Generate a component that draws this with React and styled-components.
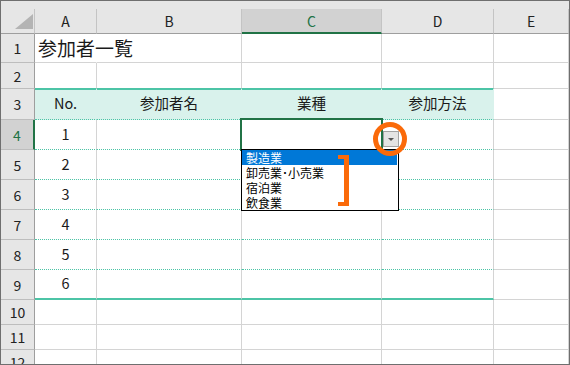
import React from 'react';
import styled, { createGlobalStyle, css } from 'styled-components';

const GRID = '#d4d4d4';
const TEAL = '#4cc4a6';
const TEAL_FILL = '#d9f2ec';
const GREEN = '#217346';
const ORANGE = '#fa6a0a';
const COLS = '34px 62px 145px 140px 112px 1fr';

const GlobalStyle = createGlobalStyle`
  body {
    margin: 0;
    background: #fff;
    font-family: "Noto Sans CJK JP", "Noto Sans", sans-serif;
  }
`;

const Sheet = styled.div`
  position: relative;
  width: 570px;
  height: 365px;
  box-sizing: border-box;
  border: 1px solid #6f6f6f;
  overflow: hidden;
  background: #fff;
  color: #1a1a1a;
`;

const HeaderBar = styled.div`
  display: grid;
  grid-template-columns: ${COLS};
  height: 33px;
  padding-top: 8px;
  box-sizing: border-box;
  background: #e6e6e6;
`;

const ColHead = styled.div`
  display: flex;
  align-items: center;
  justify-content: center;
  border-right: 1px solid #c4c4c4;
  border-bottom: ${p => (p.$active ? `2px solid ${GREEN}` : '1px solid #9e9e9e')};
  background: ${p => (p.$active ? '#d2d2d2' : 'transparent')};
  color: ${p => (p.$active ? GREEN : '#222')};
  font-size: 14px;
  line-height: 1;
`;

const Corner = styled(ColHead)`
  align-items: flex-end;
  justify-content: flex-end;
  padding: 0 1px 4px 0;
`;

const Row = styled.div`
  display: grid;
  grid-template-columns: ${COLS};
  height: ${p => p.$h}px;
`;

const RowHead = styled.div`
  display: flex;
  align-items: center;
  justify-content: center;
  background: ${p => (p.$active ? '#d2d2d2' : '#e6e6e6')};
  color: ${p => (p.$active ? GREEN : '#222')};
  border-bottom: 1px solid #bdbdbd;
  border-right: ${p => (p.$active ? `2px solid ${GREEN}` : '1px solid #9e9e9e')};
  font-size: 14px;
  line-height: 1;
`;

const edgeStyles = {
  grid: css`border-bottom: 1px solid ${GRID};`,
  teal: css`border-bottom: 1px solid ${TEAL};`,
  thick: css`border-bottom: 2px solid ${TEAL};`,
  dash: css`border-bottom: 1px dotted ${TEAL};`,
};

const Cell = styled.div`
  display: flex;
  align-items: center;
  justify-content: ${p => p.$align || 'flex-start'};
  padding: 0 3px 1px;
  white-space: nowrap;
  font-size: 14.5px;
  line-height: 1;
  background-color: ${p => p.$fill || 'transparent'};
  border-right: 1px solid ${p => (p.$noRight ? 'transparent' : p.$fill || GRID)};
  ${p => edgeStyles[p.$edge || 'grid']}
  ${p => p.$topLine && css`box-shadow: inset 0 1px 0 ${TEAL};`}
`;

const Title = styled.span`
  font-size: 19px;
`;

const Selection = styled.div`
  position: absolute;
  left: 239px;
  top: 117px;
  width: 143px;
  height: 33px;
  box-sizing: border-box;
  border: 2px solid ${GREEN};
`;

const DropButton = styled.div`
  position: absolute;
  left: 382px;
  top: 130px;
  width: 16px;
  height: 16px;
  box-sizing: border-box;
  border: 1px solid #a3a3a3;
  background: #e4e4e4;
  display: flex;
  align-items: center;
  justify-content: center;
  &::after {
    content: '';
    border-left: 3px solid transparent;
    border-right: 3px solid transparent;
    border-top: 3px solid #555;
  }
`;

const List = styled.ul`
  position: absolute;
  left: 240px;
  top: 148px;
  width: 158px;
  height: 62px;
  box-sizing: border-box;
  margin: 0;
  padding: 0 1px 0 0;
  list-style: none;
  border: 1px solid #000;
  background: #fff;
`;

const Item = styled.li`
  height: 15px;
  line-height: 15px;
  padding-left: 4px;
  font-size: 12px;
  white-space: nowrap;
  background: ${p => (p.$on ? '#0078d7' : 'transparent')};
  color: ${p => (p.$on ? '#fff' : '#000')};
`;

const Ring = styled.div`
  position: absolute;
  left: 372px;
  top: 121px;
  width: 34px;
  height: 34px;
  box-sizing: border-box;
  border: 5px solid ${ORANGE};
  border-radius: 50%;
`;

const Bracket = styled.div`
  position: absolute;
  left: 337px;
  top: 154px;
  width: 11px;
  height: 51px;
  box-sizing: border-box;
  border: 4px solid ${ORANGE};
  border-right-width: 5px;
  border-left: none;
`;

const letters = ['A', 'B', 'C', 'D', 'E'];
const labels = ['No.', '参加者名', '業種', '参加方法'];
const options = ['製造業', '卸売業･小売業', '宿泊業', '飲食業'];

const rows = [
  { n: 1, h: 29, kind: 'title' },
  { n: 2, h: 26, kind: 'above' },
  { n: 3, h: 31, kind: 'head' },
  ...[4, 5, 6, 7, 8, 9].map(n => ({ n, h: 30, kind: 'body' })),
  ...[10, 11, 12].map(n => ({ n, h: 25, kind: 'plain' })),
];

function renderCells(r) {
  return letters.map((l, i) => {
    const key = l + r.n;
    const inTable = i < 4;
    if (r.kind === 'title') {
      return i === 0 ? (
        <Cell key={key} $noRight>
          <Title>参加者一覧</Title>
        </Cell>
      ) : (
        <Cell key={key} />
      );
    }
    if (!inTable || r.kind === 'plain') return <Cell key={key} />;
    if (r.kind === 'above') return <Cell key={key} $edge="teal" />;
    if (r.kind === 'head') {
      return (
        <Cell key={key} $fill={TEAL_FILL} $edge="dash" $topLine $align="center">
          {labels[i]}
        </Cell>
      );
    }
    return (
      <Cell key={key} $edge={r.n === 9 ? 'thick' : 'dash'} $align="center">
        {i === 0 ? r.n - 3 : null}
      </Cell>
    );
  });
}

export default function App() {
  return (
    <>
      <GlobalStyle />
      <Sheet>
        <HeaderBar>
          <Corner>
            <svg width="18" height="15" viewBox="0 0 18 15">
              <polygon points="18,0 18,15 0,15" fill="#b4b4b4" />
            </svg>
          </Corner>
          {letters.map(l => (
            <ColHead key={l} $active={l === 'C'}>
              {l}
            </ColHead>
          ))}
        </HeaderBar>
        {rows.map(r => (
          <Row key={r.n} $h={r.h}>
            <RowHead $active={r.n === 4}>{r.n}</RowHead>
            {renderCells(r)}
          </Row>
        ))}

        {/* data validation dropdown, open on C4 */}
        <Selection />
        <DropButton />
        <List>
          {options.map((o, i) => (
            <Item key={o} $on={i === 0}>
              {o}
            </Item>
          ))}
        </List>
        <Bracket />
        <Ring />
      </Sheet>
    </>
  );
}
